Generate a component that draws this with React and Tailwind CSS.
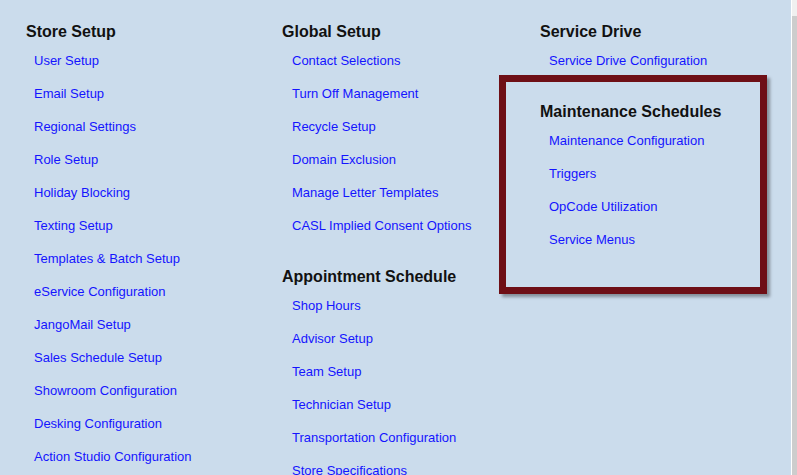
import React from "react";

const font = { fontFamily: '"Liberation Sans", Arial, sans-serif' };

function Heading({ children }) {
  return (
    <div className="h-[22px] text-[16px] leading-[20px] font-bold text-[#111111] whitespace-nowrap">
      {children}
    </div>
  );
}

function Links({ items, indent }) {
  return (
    <div className={indent}>
      {items.map((t) => (
        <div key={t} className="h-[33px] flex items-center text-[13px] leading-[15px] text-[#1414ff] whitespace-nowrap">
          {t}
        </div>
      ))}
    </div>
  );
}

export default function App() {
  return (
    <div className="w-[797px] h-[475px] overflow-hidden bg-[#cbdcec] flex" style={font}>
      <div className="flex-1 flex pl-[26px] pt-[22px]">
        <div className="w-[256px] shrink-0">
          <Heading>Store Setup</Heading>
          <Links
            indent="pl-[8px]"
            items={[
              "User Setup",
              "Email Setup",
              "Regional Settings",
              "Role Setup",
              "Holiday Blocking",
              "Texting Setup",
              "Templates & Batch Setup",
              "eService Configuration",
              "JangoMail Setup",
              "Sales Schedule Setup",
              "Showroom Configuration",
              "Desking Configuration",
              "Action Studio Configuration",
            ]}
          />
        </div>
        <div className="w-[258px] shrink-0">
          <Heading>Global Setup</Heading>
          <Links
            indent="pl-[10px]"
            items={[
              "Contact Selections",
              "Turn Off Management",
              "Recycle Setup",
              "Domain Exclusion",
              "Manage Letter Templates",
              "CASL Implied Consent Options",
            ]}
          />
          <div className="mt-[25px]">
            <Heading>Appointment Schedule</Heading>
            <Links
              indent="pl-[10px]"
              items={[
                "Shop Hours",
                "Advisor Setup",
                "Team Setup",
                "Technician Setup",
                "Transportation Configuration",
                "Store Specifications",
              ]}
            />
          </div>
        </div>
        <div className="flex-1">
          <Heading>Service Drive</Heading>
          <Links indent="pl-[9px]" items={["Service Drive Configuration"]} />
          <div className="-mt-[2px] -ml-[41px] w-[268px] h-[219px] border-[7px] border-[#6e0f16] shadow-[3px_3px_3px_rgba(0,0,0,0.35)] pl-[34px] pt-[20px]">
            <Heading>Maintenance Schedules</Heading>
            <Links
              indent="pl-[9px]"
              items={["Maintenance Configuration", "Triggers", "OpCode Utilization", "Service Menus"]}
            />
          </div>
        </div>
      </div>
      <div className="w-[6px] shrink-0 border-l border-white flex flex-col">
        <div className="h-[16px] bg-[#f0f0f0]" />
        <div className="flex-1 bg-[#cdcdcd]" />
      </div>
    </div>
  );
}
